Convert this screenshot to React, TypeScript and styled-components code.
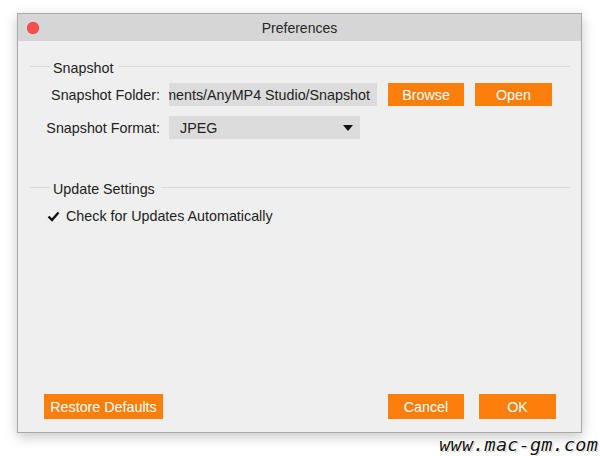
import React from "react";
import styled, { createGlobalStyle } from "styled-components";

const Global = createGlobalStyle`
  html, body { margin: 0; padding: 0; background: #ffffff; }
  body { width: 600px; height: 456px; overflow: hidden; position: relative; font-family: "Liberation Sans", Arial, sans-serif; }
`;

const Page = styled.div`
  width: 600px;
  height: 456px;
  position: relative;
  padding: 13px 0 0 17px;
  box-sizing: border-box;
`;

const Window = styled.div`
  width: 565px;
  height: 420px;
  box-sizing: border-box;
  border: 1px solid #a9a9a9;
  background: #efefef;
  display: flex;
  flex-direction: column;
  box-shadow: 0 4px 12px rgba(0, 0, 0, 0.22);
`;

const TitleBar = styled.div`
  height: 27px;
  background: #d6d6d6;
  position: relative;
  display: flex;
  align-items: center;
  justify-content: center;
  font-size: 14px;
  color: #262626;
`;

const CloseDot = styled.span`
  position: absolute;
  left: 9px;
  top: 8px;
  width: 12px;
  height: 12px;
  border-radius: 50%;
  background: #fc4f4e;
  box-shadow: inset 0 0 0 0.5px #de3c39;
`;

const Content = styled.div`
  flex: 1;
  padding: 19px 11px 0 12px;
  display: flex;
  flex-direction: column;
`;

const GroupHeader = styled.div<{ $top: number }>`
  display: flex;
  align-items: center;
  height: 16px;
  margin-top: ${(p) => p.$top}px;
  font-size: 14.3px;
  color: #222;
`;

const Rule = styled.span<{ $w?: number }>`
  height: 1px;
  background: #d9d9d9;
  margin-top: -3px;
  ${(p) => (p.$w ? `width: ${p.$w}px; margin-right: 3px;` : `flex: 1; margin-left: 6px;`)}
`;

const Form = styled.div`
  display: grid;
  grid-template-columns: 130px auto;
  column-gap: 9px;
  row-gap: 10px;
  margin-top: 7px;
  align-items: center;
`;

const Label = styled.span`
  text-align: right;
  font-size: 14.3px;
  color: #222;
  white-space: nowrap;
`;

const FieldRow = styled.div`
  display: flex;
  align-items: center;
  gap: 11px;
`;

const PathField = styled.div`
  width: 208px;
  height: 23px;
  background: #dcdcdc;
  display: flex;
  align-items: center;
  justify-content: flex-end;
  overflow: hidden;
  padding-right: 7px;
  box-sizing: border-box;
  font-size: 14.3px;
  color: #222;
  white-space: nowrap;
`;

const Select = styled.div`
  width: 191px;
  height: 23px;
  background: #dcdcdc;
  display: flex;
  align-items: center;
  justify-content: space-between;
  padding: 0 7px 0 11px;
  box-sizing: border-box;
  font-size: 14.3px;
  color: #222;
`;

const Arrow = styled.span`
  width: 0;
  height: 0;
  border-left: 5px solid transparent;
  border-right: 5px solid transparent;
  border-top: 6px solid #111;
`;

const Button = styled.button<{ $w: number; $h?: number }>`
  width: ${(p) => p.$w}px;
  height: ${(p) => p.$h ?? 23}px;
  border: none;
  background: #fd7f0b;
  color: #ffffff;
  font-family: "Liberation Sans", Arial, sans-serif;
  font-size: 14.3px;
  padding: 0;
  cursor: pointer;
`;

const CheckRow = styled.label`
  display: flex;
  align-items: center;
  gap: 6px;
  margin-top: 11px;
  padding-left: 17px;
  height: 16px;
  font-size: 14.3px;
  color: #222;
`;

const Footer = styled.div`
  display: flex;
  align-items: center;
  padding: 0 25px 13px 26px;
  gap: 15px;
`;

const Spacer = styled.span`
  flex: 1;
`;

const Watermark = styled.div`
  position: absolute;
  right: 2px;
  top: 434px;
  font-family: "DejaVu Sans Mono", monospace;
  font-style: italic;
  font-size: 18.5px;
  color: #111;
  letter-spacing: 0.2px;
  text-shadow: 1px 0 #fff, -1px 0 #fff, 0 1px #fff, 0 -1px #fff, 1px 1px 1px rgba(0,0,0,0.4);
`;

export default function App() {
  return (
    <>
      <Global />
      <Page>
        <Window>
          <TitleBar>
            <CloseDot />
            Preferences
          </TitleBar>
          <Content>
            <GroupHeader $top={0}>
              <Rule $w={20} />
              Snapshot
              <Rule />
            </GroupHeader>
            <Form>
              <Label>Snapshot Folder:</Label>
              <FieldRow>
                <PathField>ments/AnyMP4 Studio/Snapshot</PathField>
                <Button $w={76}>Browse</Button>
                <Button $w={77}>Open</Button>
              </FieldRow>
              <Label>Snapshot Format:</Label>
              <FieldRow>
                <Select>
                  JPEG
                  <Arrow />
                </Select>
              </FieldRow>
            </Form>
            <GroupHeader $top={42}>
              <Rule $w={20} />
              Update Settings
              <Rule />
            </GroupHeader>
            <CheckRow>
              <svg width="13" height="11" viewBox="0 0 13 11">
                <polyline points="1.5,5.5 5,9 11.5,1.5" fill="none" stroke="#111" strokeWidth="2.4" />
              </svg>
              Check for Updates Automatically
            </CheckRow>
          </Content>
          <Footer>
            <Button $w={119} $h={25}>Restore Defaults</Button>
            <Spacer />
            <Button $w={76} $h={25}>Cancel</Button>
            <Button $w={77} $h={25}>OK</Button>
          </Footer>
        </Window>
        <Watermark>www.mac-gm.com</Watermark>
      </Page>
    </>
  );
}
